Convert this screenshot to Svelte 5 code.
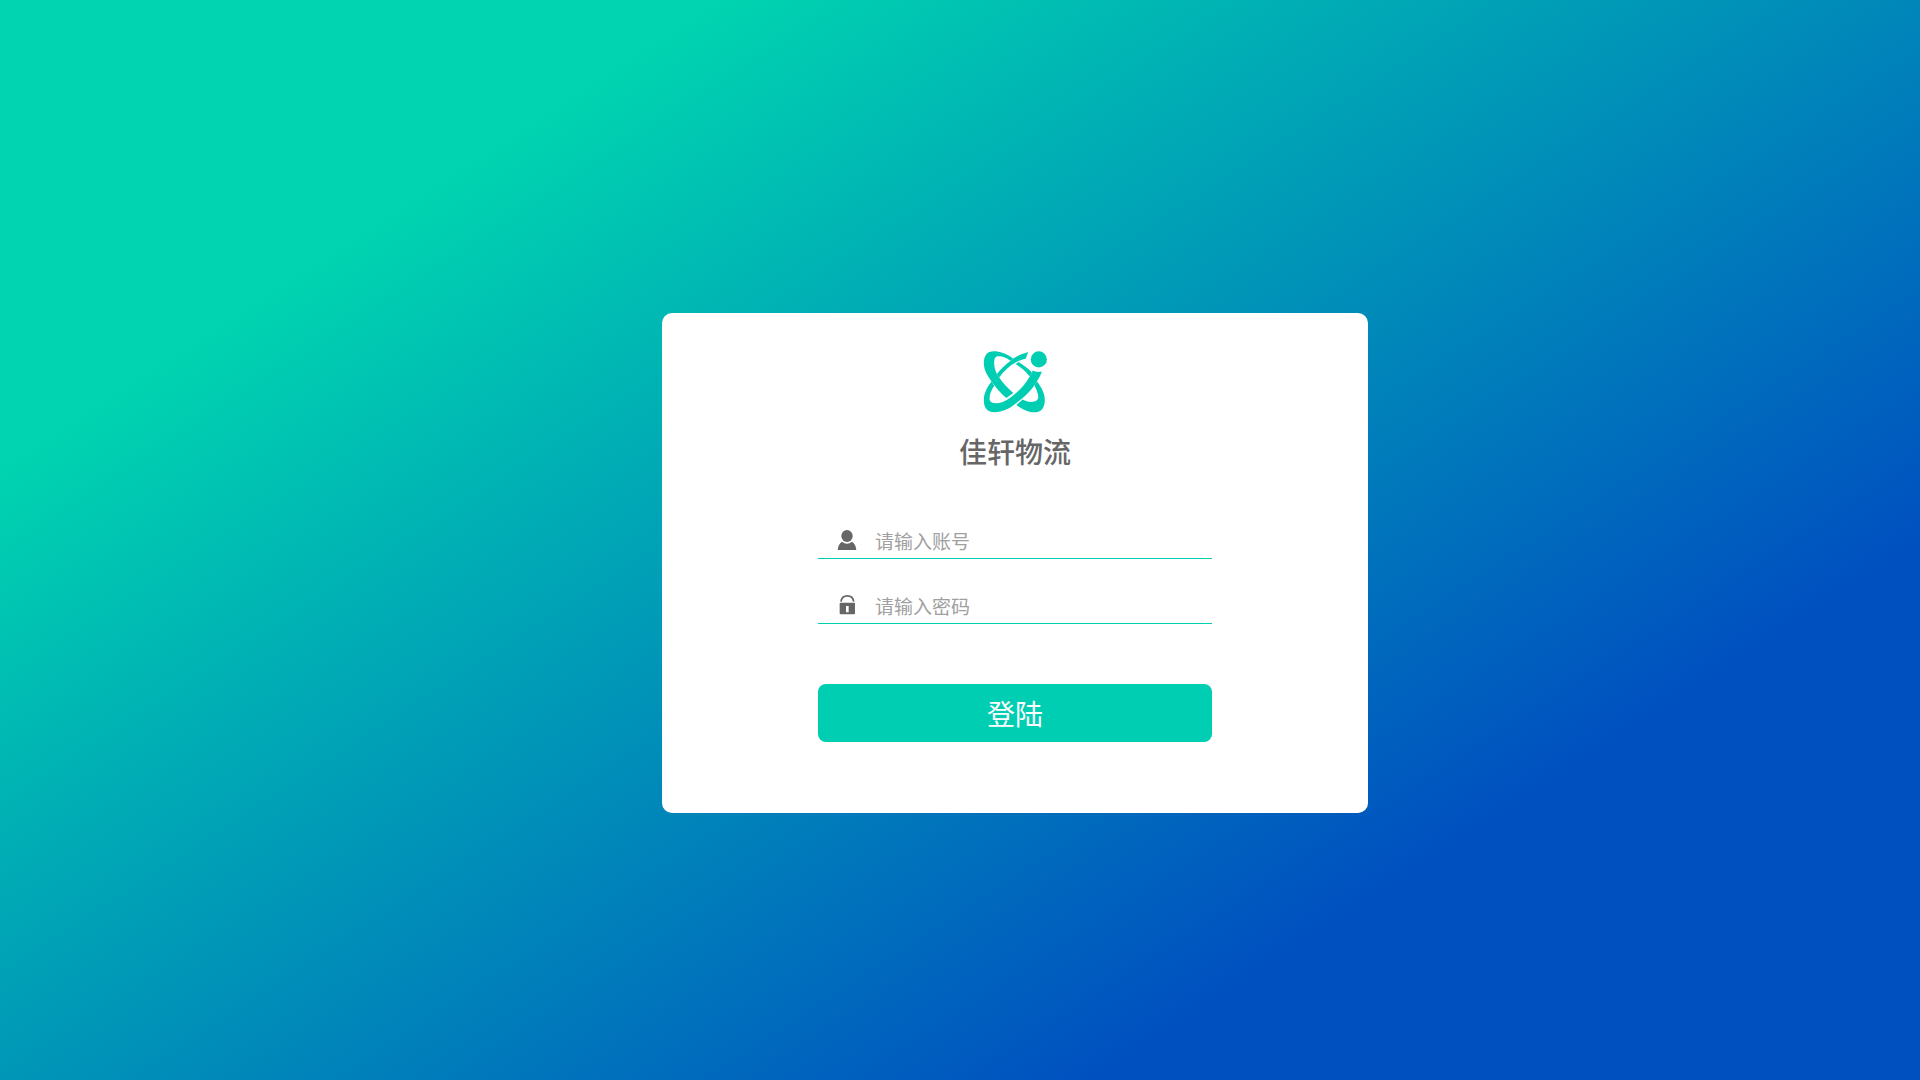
<script>
  let account = $state('');
  let password = $state('');
</script>

<main class="page">
  <form class="card" onsubmit={(e) => e.preventDefault()}>
    <svg class="logo" viewBox="39 32 190 185" aria-hidden="true">
      <path d="M129 55C108 39 88 33 71 33C50 33 41 47 41 68C41 88 50 103 64 123C77 142 91 158 108 172L129 157C112 143 98 128 87 111L80 101C74 89 71 75 72 63C73 53 76 48 84 48C96 47 108 52 120 61Z" />
      <path d="M173 35C150 42 135 49 121 61C105 73 92 85 80 101L87 111C100 92 117 76 136 66C147 60 157 57 166 55Z" />
      <path d="M136 71L145 65C162 76 174 85 185 97L178 108C166 93 153 82 136 71Z" />
      <path d="M64 123C50 141 41 159 41 179C41 202 52 215 73 215C96 214 116 206 136 189C163 169 185 148 199 123C206 113 211 103 214 93Q200 97 187 90Q184 99 178 108C165 130 149 149 129 164C115 175 101 185 87 187C70 190 58 186 58 174C58 161 64 148 72 136Z" />
      <path d="M199 122C215 142 223 160 223 179C222 203 213 215 192 215C171 214 154 205 138 193L157 177C167 183 176 185 185 184C201 183 205 174 203 165C201 155 198 146 192 136Z" />
      <circle cx="205" cy="57" r="24" />
    </svg>
    <h1>佳轩物流</h1>

    <div class="field">
      <label for="account" aria-label="账号">
        <svg viewBox="0 0 60 60">
          <ellipse cx="30" cy="18" rx="17" ry="18" />
          <path d="M15 35Q30 47 45 35Q57 43 58 60H2Q3 43 15 35Z" />
        </svg>
      </label>
      <input id="account" type="text" placeholder="请输入账号" bind:value={account} />
    </div>
    <div class="field">
      <label for="password" aria-label="密码">
        <svg viewBox="0 0 60 60">
          <path d="M12 20C15 -3 47 -3 50 20" class="shackle" />
          <path fill-rule="evenodd" d="M11 23H51Q54 23 54 26V55Q54 58 51 58H11Q8 58 8 55V26Q8 23 11 23ZM27 33V52H35V33Z" />
        </svg>
      </label>
      <input id="password" type="password" placeholder="请输入密码" bind:value={password} />
    </div>

    <button type="submit">登陆</button>
  </form>
</main>

<style>
  :global(body) {
    margin: 0;
  }

  .page {
    box-sizing: border-box;
    min-height: 100vh;
    padding: 46px 0 0 110px;
    display: flex;
    align-items: center;
    justify-content: center;
    background: linear-gradient(147deg, #00d4b0 20%, #0050c0 77%);
    font-family: 'Noto Sans CJK SC', sans-serif;
  }

  .card {
    box-sizing: border-box;
    width: 100%;
    max-width: 706px;
    padding: 38px 156px 71px;
    display: flex;
    flex-direction: column;
    align-items: center;
    background: #fff;
    border-radius: 10px;
  }

  .logo {
    width: 64px;
    height: 62px;
    fill: #00ceb2;
  }

  h1 {
    margin: 18px 0 52px;
    font-size: 28px;
    line-height: 40px;
    font-weight: 500;
    color: #666;
  }

  .field {
    box-sizing: border-box;
    width: 100%;
    height: 36px;
    margin-bottom: 29px;
    padding-left: 19px;
    display: flex;
    gap: 18px;
    border-bottom: 1px solid #00ceb2;
  }

  label {
    padding-top: 7px;
  }

  label svg {
    display: block;
    width: 20px;
    height: 20px;
    fill: #666;
  }

  .shackle {
    fill: none;
    stroke: #666;
    stroke-width: 5;
  }

  input {
    flex: 1;
    min-width: 0;
    padding: 0;
    border: 0;
    outline: 0;
    background: none;
    font: inherit;
    font-size: 19px;
    color: #666;
  }

  input::placeholder {
    color: #a0a0a0;
  }

  button {
    width: 100%;
    height: 58px;
    margin-top: 31px;
    border: 0;
    border-radius: 8px;
    background: #00ceb2;
    color: #fff;
    font: inherit;
    font-size: 28px;
    cursor: pointer;
  }
</style>
